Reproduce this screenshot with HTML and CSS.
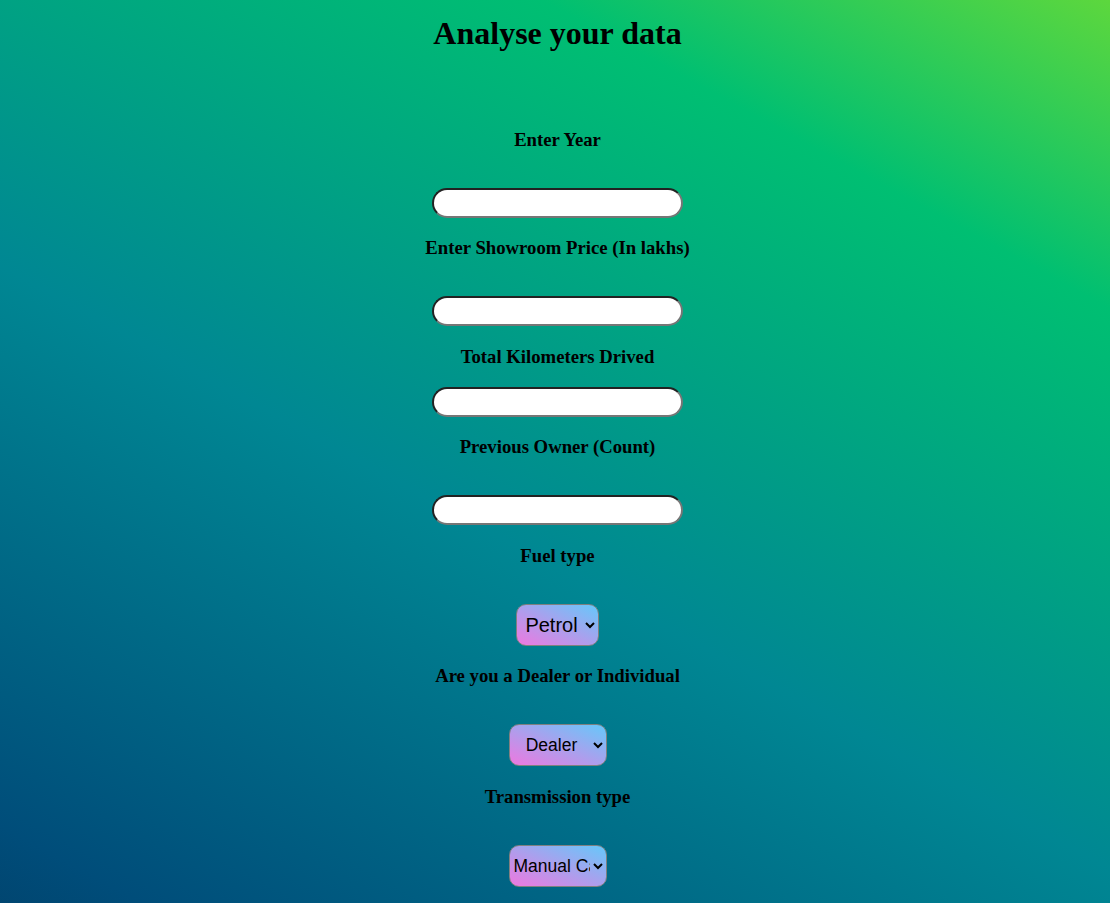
FILE: index.html
```html
<!DOCTYPE html>
<html lang="en">
<head>
<meta charset="utf-8">
<title>Analyse your data</title>
<link rel="stylesheet" href="styles.css">
</head>
<body>
<main class="form-page">
  <h1 class="title">Analyse your data</h1>
  <form class="form">
    <label class="label label-first" for="year">Enter Year</label>
    <input class="field" type="text" id="year" name="year">

    <label class="label" for="price">Enter Showroom Price (In lakhs)</label>
    <input class="field" type="text" id="price" name="price">

    <label class="label" for="kms">Total Kilometers Drived</label>
    <input class="field field-close" type="text" id="kms" name="kms">

    <label class="label" for="owner">Previous Owner (Count)</label>
    <input class="field" type="text" id="owner" name="owner">

    <label class="label" for="fuel">Fuel type</label>
    <select class="choice choice-fuel" id="fuel" name="fuel">
      <option>Petrol</option>
      <option>Diesel</option>
      <option>CNG</option>
    </select>

    <label class="label" for="seller">Are you a Dealer or Individual</label>
    <select class="choice choice-wide" id="seller" name="seller">
      <option>Dealer</option>
      <option>Individual</option>
    </select>

    <label class="label" for="trans">Transmission type</label>
    <select class="choice choice-wide" id="trans" name="trans">
      <option>Manual Car</option>
      <option>Automatic Car</option>
    </select>
  </form>
</main>
</body>
</html>
```

FILE: styles.css
```css
html {
  height: 100%;
  background: linear-gradient(28.5deg, #051937 -32.2%, #004d7a 5.1%, #008793 42.3%, #00bf72 79.5%, #a8eb12 116.7%);
}

body {
  margin: 0;
  font-family: "Liberation Serif", "Times New Roman", serif;
  color: #000;
}

.form-page {
  display: flex;
  flex-direction: column;
  align-items: center;
  padding: 14.5px 0 0 5px;
}

.title {
  margin: 0;
  font-size: 32px;
  line-height: 37px;
  font-weight: bold;
}

.form {
  display: flex;
  flex-direction: column;
  align-items: center;
}

.label {
  display: block;
  font-size: 18.72px;
  line-height: 21px;
  font-weight: bold;
  margin-top: 19.4px;
}

.label-first {
  margin-top: 77.4px;
}

.field {
  box-sizing: border-box;
  width: 251px;
  height: 30px;
  margin: 38px 0 0;
  padding: 1px 12px;
  background: #fff;
  border-width: 2px;
  border-style: solid;
  border-color: #222 #767676 #767676 #222;
  border-radius: 15px;
  font-size: 16px;
  font-family: "Liberation Sans", Arial, sans-serif;
  outline: none;
}

.field-close {
  margin-top: 20.3px;
}

.choice {
  box-sizing: border-box;
  height: 42px;
  margin-top: 38px;
  border: 1px solid #808080;
  border-radius: 10px;
  background: linear-gradient(to top right, #ee78e0, #66c8fa);
  font-family: "Liberation Sans", Arial, sans-serif;
  font-size: 20px;
  color: #000;
  text-align-last: center;
}

.choice-fuel {
  width: 83px;
}

.choice-wide {
  width: 98px;
  font-size: 17.5px;
}
```
